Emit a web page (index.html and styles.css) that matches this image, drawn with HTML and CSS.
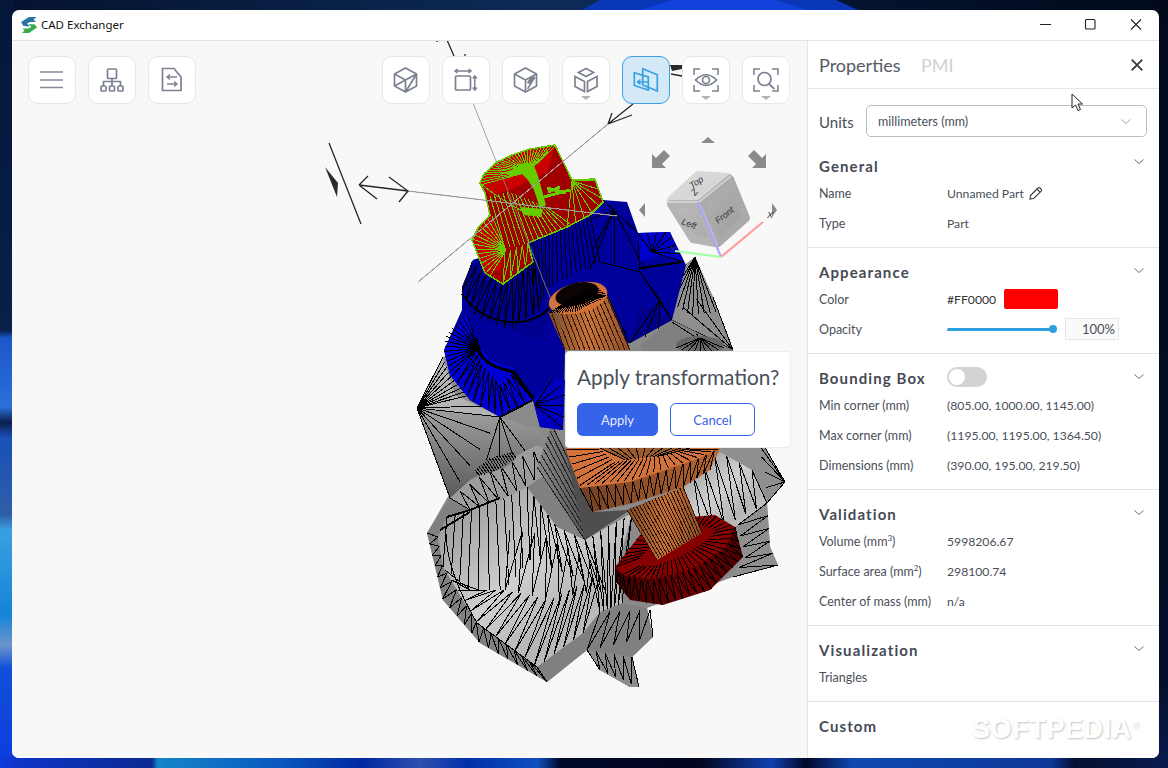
FILE: index.html
```html
<!DOCTYPE html>
<html lang="en">
<head>
<meta charset="utf-8">
<title>CAD Exchanger</title>
<link rel="stylesheet" href="styles.css">
</head>
<body>
<svg class="wallpaper" viewBox="0 0 1168 768" aria-hidden="true">
  <defs>
    <linearGradient id="wpTop" x1="0" x2="1" y1="0" y2="0">
      <stop offset="0" stop-color="#04122e"/><stop offset=".45" stop-color="#0c2a55"/><stop offset=".5" stop-color="#0c2a55"/>
      <stop offset=".75" stop-color="#04122c"/><stop offset="1" stop-color="#020a1c"/>
    </linearGradient>
    <linearGradient id="wpLeft" x1="0" x2="0" y1="0" y2="1">
      <stop offset="0" stop-color="#05163a"/><stop offset=".43" stop-color="#08204a"/><stop offset=".44" stop-color="#1c56c8"/>
      <stop offset=".53" stop-color="#2a70d8"/><stop offset=".55" stop-color="#0a1e50"/><stop offset=".57" stop-color="#1a50b8"/>
      <stop offset=".67" stop-color="#2e5fa8"/><stop offset=".69" stop-color="#3aa0e0"/><stop offset=".8" stop-color="#1584d8"/>
      <stop offset=".84" stop-color="#6d94cc"/><stop offset=".87" stop-color="#1050d8"/><stop offset="1" stop-color="#0d3be0"/>
    </linearGradient>
    <linearGradient id="wpBottom" x1="0" x2="1" y1="0" y2="0">
      <stop offset="0" stop-color="#0d3be0"/><stop offset=".015" stop-color="#0d34c8"/><stop offset=".13" stop-color="#0c2a90"/>
      <stop offset=".135" stop-color="#1585c8"/><stop offset=".24" stop-color="#0a58c0"/><stop offset=".31" stop-color="#0028a0"/>
      <stop offset=".36" stop-color="#3050b0"/><stop offset=".4" stop-color="#0030a8"/><stop offset=".46" stop-color="#1050c0"/>
      <stop offset=".48" stop-color="#00082a"/><stop offset=".6" stop-color="#02061e"/><stop offset=".66" stop-color="#1040b0"/>
      <stop offset=".69" stop-color="#02082a"/><stop offset=".73" stop-color="#1048b0"/><stop offset=".9" stop-color="#0c3898"/>
      <stop offset=".92" stop-color="#041030"/><stop offset="1" stop-color="#081a50"/>
    </linearGradient>
    <linearGradient id="wpRight" x1="0" x2="0" y1="0" y2="1">
      <stop offset="0" stop-color="#020a1c"/><stop offset=".88" stop-color="#041028"/><stop offset="1" stop-color="#081a50"/>
    </linearGradient>
  </defs>
  <rect width="1168" height="12" fill="url(#wpTop)"/>
  <path d="M582 10 L600 0 H836 L858 10 Z" fill="#0a36b8"/>
  <ellipse cx="724" cy="55" rx="124" ry="60" fill="#1242dc"/>
  <rect width="14" height="768" fill="url(#wpLeft)"/>
  <rect x="1156" width="12" height="768" fill="url(#wpRight)"/>
  <rect y="756" width="1168" height="12" fill="url(#wpBottom)"/>
</svg>

<main class="window">
  <header class="titlebar">
    <svg class="app-logo" viewBox="0 0 18 18" aria-hidden="true">
      <path d="M1 6 L9 1 H16.500 L13.500 3.800 L16 6 H10 L7 7.500 L10 10.500 L3.500 10 Z" fill="#2c74a8"/>
      <path d="M17 11.500 L9 17 H2 L4.500 14.500 L2.500 12.500 H8.500 L11.500 10.800 L8.500 8 L15 8.500 Z" fill="#37a84f"/>
    </svg>
    <span class="app-title">CAD Exchanger</span>
    <div class="win-controls">
      <svg class="win-btn" viewBox="0 0 46 30" aria-hidden="true"><path d="M16 14.500 H27"/></svg>
      <svg class="win-btn" viewBox="0 0 46 30" aria-hidden="true"><rect x="15.500" y="9.500" width="9.500" height="9.500" rx="1"/></svg>
      <svg class="win-btn" viewBox="0 0 46 30" aria-hidden="true"><path d="M15 9.500 L25 19.500 M25 9.500 L15 19.500"/></svg>
    </div>
  </header>

  <div class="workspace">
    <section class="viewport">
      <svg id="model" class="model" viewBox="12 40 795 718" aria-hidden="true">
        <defs>
          <linearGradient id="gGrayDark" x1="0" x2="0" y1="0" y2="1"><stop offset="0" stop-color="#a0a0a0"/><stop offset="1" stop-color="#5a5a5a"/></linearGradient>
          <linearGradient id="gGrayLight" x1="0" x2="1" y1="0" y2="1"><stop offset="0" stop-color="#8c8c8c"/><stop offset=".45" stop-color="#d0d0d0"/><stop offset=".7" stop-color="#b4b4b4"/><stop offset="1" stop-color="#d4d4d4"/></linearGradient>
          <linearGradient id="gBox" x1="0" x2="1" y1="0" y2="0"><stop offset="0" stop-color="#8a8a8a"/><stop offset="1" stop-color="#4a4a4a"/></linearGradient>
          <linearGradient id="gOrangeShaft" x1="0" x2="1" y1="0" y2="0"><stop offset="0" stop-color="#7d4a26"/><stop offset=".5" stop-color="#c87238"/><stop offset="1" stop-color="#8e5028"/></linearGradient>
          <linearGradient id="gOrangeBand" x1="0" x2="1" y1="0" y2="0"><stop offset="0" stop-color="#6c3c20"/><stop offset="1" stop-color="#b9642f"/></linearGradient>
          <linearGradient id="gRedBand" x1="0" x2="1" y1="0" y2="0"><stop offset="0" stop-color="#3a0000"/><stop offset=".6" stop-color="#700000"/><stop offset="1" stop-color="#4a0000"/></linearGradient>
          <linearGradient id="gCubeTop" x1="0" x2="1" y1="0" y2="1"><stop offset="0" stop-color="#dedede"/><stop offset="1" stop-color="#cecece"/></linearGradient>
          <linearGradient id="gCubeLeft" x1="0" x2="1" y1="0" y2="1"><stop offset="0" stop-color="#bcbcbc"/><stop offset="1" stop-color="#a8a8a8"/></linearGradient>
          <linearGradient id="gCubeRight" x1="0" x2="1" y1="0" y2="1"><stop offset="0" stop-color="#b4b4b4"/><stop offset="1" stop-color="#9c9c9c"/></linearGradient>
        </defs>

        <g id="mesh"></g>

        <g class="dims">
          <path class="dim-thin" d="M418 282 L608 124 M408 191 L617 216 M473 103 L563 330"/>
          <path class="dim" d="M329 143 L361 224 M359 185 L368 176 M359 185 L377 199 M359 185 L408 191 M389 177 L408 191 L399 202 M608 124 L632 115 M608 124 L612 113 M608 124 L633 104 M447 40 L454 56 M437 40 V42 M465 54 V56"/>
          <path class="dim-fill" d="M325 167 L338 183 L337 197 Z M670 65 H682 V69 L672 71 Z"/>
          <path class="dim" d="M671 74 L682 76"/>
        </g>

        <g class="nav-arrows">
          <path d="M708 137 L715 143 H701 Z M645 203 V217 L639 210 Z M772 203 L777 210 L772 217 Z"/>
          <path d="M652 168 V154 L656 158 L664 150 L670 156 L662 164 L666 168 Z"/>
          <path d="M766 168 V154 L762 158 L754 150 L748 156 L756 164 L752 168 Z"/>
        </g>
        <g class="cube">
          <path class="cube-face" d="M671 200 L698 175 L728 177 L702 200 Z" fill="url(#gCubeTop)" stroke="#d8d8d8"/>
          <path class="cube-face" d="M671 204 L698 204 L715 243 L693 239 Z" fill="url(#gCubeLeft)" stroke="#b4b4b4"/>
          <path class="cube-face" d="M701 203 L730 179 L746 218 L718 243 Z" fill="url(#gCubeRight)" stroke="#aaaaaa"/>
          <path class="cube-edge" d="M668 202 L699 202 L731 176 M699 203 L717 245"/>
          <text class="cube-label" transform="translate(692 189) rotate(-35)">Top</text>
          <text class="cube-label" transform="translate(681 224) rotate(20)">Left</text>
          <text class="cube-label" transform="translate(718 224) rotate(-38)">Front</text>
          <text class="cube-label" transform="translate(695 196) rotate(-50)">Z</text>
          <text class="cube-label" transform="translate(767 218)">X</text>
          <text class="cube-label" transform="translate(669 252)">Y</text>
          <path class="axis axis-z" d="M698 202 L721 257"/>
          <path class="axis axis-x" d="M763 222 L721 257"/>
          <path class="axis axis-y" d="M675 251 L721 257"/>
        </g>
      </svg>

      <div class="toolbar">
        <div class="tool-group">
          <button class="tool" type="button" aria-label="Menu"><svg viewBox="0 0 48 48" aria-hidden="true"><path class="menu-lines" d="M12 16 H35 M12 24 H35 M12 31.500 H35"/></svg></button>
          <button class="tool" type="button" aria-label="Structure"><svg viewBox="0 0 48 48" aria-hidden="true"><rect x="19.500" y="13" width="9" height="9.500" rx="1"/><path d="M24 22.500 V30 M15.500 30 V25.500 H32.500 V30"/><rect x="13" y="30" width="5" height="5" rx="1"/><rect x="21.500" y="30" width="5" height="5" rx="1"/><rect x="30" y="30" width="5" height="5" rx="1"/></svg></button>
          <button class="tool" type="button" aria-label="Convert"><svg viewBox="0 0 48 48" aria-hidden="true"><path d="M14.500 12.500 H26 L33 21 V34.500 H14.500 Z"/><path class="arrow" d="M29 21 H19 M22 18.500 L19 21 L22 23.500 M19 28 H29 M26 25.500 L29 28 L26 30.500"/></svg></button>
        </div>
        <div class="tool-group">
          <button class="tool" type="button" aria-label="Wireframe"><svg viewBox="0 0 48 48" aria-hidden="true"><path d="M23.500 12 L34.500 18 V30 L23.500 36 L12.500 30 V18 Z M12.500 18 L23.500 24 L34.500 18 M23.500 24 V36 M12.500 30 L23.500 24 M34.500 18 L23.500 36"/></svg></button>
          <button class="tool" type="button" aria-label="Dimensions"><svg viewBox="0 0 48 48" aria-hidden="true"><rect x="13.500" y="20" width="15" height="14" rx="1"/><path class="arrow" d="M13 15 H29 M15.500 13 L13 15 L15.500 17 M26.500 13 L29 15 L26.500 17 M32.800 20 V34 M30.800 22.500 L32.800 20 L34.800 22.500 M30.800 31.500 L32.800 34 L34.800 31.500"/></svg></button>
          <button class="tool" type="button" aria-label="Section"><svg viewBox="0 0 48 48" aria-hidden="true"><path d="M23.500 12 L34.500 18 V30 L23.500 36 L12.500 30 V18 Z M12.500 18 L23.500 24 L34.500 18 M23.500 24 V36"/><path class="arrow" d="M25.500 33 L33 21 M27 28 L31.500 20.500 M25.500 27 L29.500 21"/></svg></button>
          <button class="tool" type="button" aria-label="Explode"><svg viewBox="0 0 48 48" aria-hidden="true"><path d="M24 12.500 L31.500 16.500 L24 20.500 L16.500 16.500 Z M13 20.500 L22.500 25.500 V35.500 L13 30.500 Z M35 20.500 L25.500 25.500 V35.500 L35 30.500 Z"/></svg><span class="caret"></span></button>
          <button class="tool tool-active" type="button" aria-label="Transform"><svg viewBox="0 0 48 48" aria-hidden="true"><path d="M20.700 12.700 L35.300 18.700 V35 L20.700 29 Z"/><path d="M12.300 16.700 L26.300 21 V34 L12.300 29.500 Z"/><path class="arrow" d="M27 26 H15.500 M18.500 23.500 L15.500 26 L18.500 28.500"/></svg></button>
          <button class="tool" type="button" aria-label="Visibility"><svg viewBox="0 0 48 48" aria-hidden="true"><path class="arrow" d="M12 19 V13 H18 M30 13 H36 V19 M12 29 V35 H18 M30 35 H36 V29"/><path d="M13.500 24 Q24 13.500 34.500 24 Q24 34.500 13.500 24 Z"/><circle cx="24" cy="24" r="3.500"/></svg><span class="caret"></span></button>
          <button class="tool" type="button" aria-label="Zoom"><svg viewBox="0 0 48 48" aria-hidden="true"><path class="arrow" d="M12 19 V13 H18 M30 13 H36 V19 M12 29 V35 H18 M30 35 H36 V29"/><circle cx="22.500" cy="23" r="6.500"/><path d="M27 28 L32.500 33"/></svg><span class="caret"></span></button>
        </div>
      </div>

      <div class="dialog">
        <p class="dialog-title">Apply transformation?</p>
        <div class="dialog-actions">
          <button class="btn btn-primary" type="button">Apply</button>
          <button class="btn btn-outline" type="button">Cancel</button>
        </div>
      </div>
    </section>

    <aside class="panel">
      <div class="panel-head">
        <span class="tab tab-on">Properties</span>
        <span class="tab tab-off">PMI</span>
        <svg class="panel-close" viewBox="0 0 12 12" aria-hidden="true"><path d="M.7 .7 L11.300 11.300 M11.300 .7 L.7 11.300"/></svg>
      </div>

      <div class="section section-first">
        <div class="units">
          <span class="units-label">Units</span>
          <div class="select"><span>millimeters (mm)</span><svg class="chev chev-light" viewBox="0 0 10 5" aria-hidden="true"><path d="M.5 .5 L5 4.500 L9.500 .5"/></svg></div>
        </div>
        <div class="sec-head"><h2>General</h2><svg class="chev" viewBox="0 0 10 5" aria-hidden="true"><path d="M.5 .5 L5 4.500 L9.500 .5"/></svg></div>
        <div class="row"><span>Name</span><span class="val">Unnamed Part <svg class="pencil" viewBox="0 0 14 14" aria-hidden="true"><path d="M1.500 9.500 L9 2 Q10 1 11 2 L12.300 3.300 Q13 4.300 12 5.300 L4.700 12.500 L1 13 Z M8 3 L11.300 6.300"/></svg></span></div>
        <div class="row"><span>Type</span><span class="val">Part</span></div>
      </div>

      <div class="section">
        <div class="sec-head"><h2>Appearance</h2><svg class="chev" viewBox="0 0 10 5" aria-hidden="true"><path d="M.5 .5 L5 4.500 L9.500 .5"/></svg></div>
        <div class="row"><span>Color</span><span class="val val-color"><span class="hex">#FF0000</span><span class="swatch"></span></span></div>
        <div class="row"><span>Opacity</span><span class="val val-slider"><span class="slider"><span class="thumb"></span></span><span class="pct">100%</span></span></div>
      </div>

      <div class="section">
        <div class="sec-head"><h2>Bounding Box</h2><span class="toggle"><span class="knob"></span></span><svg class="chev" viewBox="0 0 10 5" aria-hidden="true"><path d="M.5 .5 L5 4.500 L9.500 .5"/></svg></div>
        <div class="row"><span>Min corner (mm)</span><span class="val">(805.00, 1000.00, 1145.00)</span></div>
        <div class="row"><span>Max corner (mm)</span><span class="val">(1195.00, 1195.00, 1364.50)</span></div>
        <div class="row"><span>Dimensions (mm)</span><span class="val">(390.00, 195.00, 219.50)</span></div>
      </div>

      <div class="section">
        <div class="sec-head"><h2>Validation</h2><svg class="chev" viewBox="0 0 10 5" aria-hidden="true"><path d="M.5 .5 L5 4.500 L9.500 .5"/></svg></div>
        <div class="row"><span>Volume (mm<sup>3</sup>)</span><span class="val">5998206.67</span></div>
        <div class="row"><span>Surface area (mm<sup>2</sup>)</span><span class="val">298100.74</span></div>
        <div class="row"><span>Center of mass (mm)</span><span class="val">n/a</span></div>
      </div>

      <div class="section">
        <div class="sec-head"><h2>Visualization</h2><svg class="chev" viewBox="0 0 10 5" aria-hidden="true"><path d="M.5 .5 L5 4.500 L9.500 .5"/></svg></div>
        <div class="row"><span>Triangles</span></div>
      </div>

      <div class="section section-last">
        <div class="sec-head"><h2>Custom</h2></div>
      </div>

      <span class="watermark">SOFTPEDIA<sup>®</sup></span>
      <svg class="cursor" viewBox="0 0 13 19" aria-hidden="true"><path d="M1 1 V15 L4.500 12 L7 17.500 L9.500 16.500 L7 11 H11.500 Z"/></svg>
    </aside>
  </div>
</main>
<script src="model.js"></script>
</body>
</html>
```

FILE: styles.css
```css
* { box-sizing: border-box; }
html, body { margin: 0; height: 100%; }
body {
  padding: 10px 9px 10px 12px;
  background: #06163a;
  font-family: Lato, "Noto Sans", sans-serif;
  overflow: hidden;
}
.wallpaper { position: absolute; left: 0; top: 0; width: 1168px; height: 768px; }

.window {
  position: relative;
  display: flex;
  flex-direction: column;
  height: 748px;
  background: #fff;
  border-radius: 7px;
  overflow: hidden;
}

.titlebar { display: flex; align-items: center; height: 31px; flex: none; padding: 0 0 1px 8px; border-bottom: 1px solid #e3e3e3; }
.app-logo { width: 18px; height: 18px; }
.app-title { margin-left: 3px; font: 11.500px "Noto Sans", sans-serif; color: #111; }
.win-controls { display: flex; margin-left: auto; margin-right: -3px; }
.win-btn { width: 46px; height: 30px; fill: none; stroke: #222; stroke-width: 1.100; }

.workspace { display: flex; flex: 1; min-height: 0; }

.viewport { position: relative; flex: 1; background: #f8f8f8; overflow: hidden; }
.model { position: absolute; left: 0; top: -1px; width: 795px; height: 718px; }
.mesh-line { fill: none; shape-rendering: crispEdges; }

.dim-thin { fill: none; stroke: #8c8c8c; stroke-width: .8; }
.dim { fill: none; stroke: #262626; stroke-width: 1.300; }
.dim-fill { fill: #2a2a2a; }
.nav-arrows path { fill: #8a8a8a; }
.cube-face { stroke-width: 8; stroke-linejoin: round; }
.cube-edge { fill: none; stroke: #e8e8e8; stroke-width: 2; opacity: .6; }
.cube-label { font: italic 9px "Liberation Sans", sans-serif; fill: #333; }
.axis { fill: none; stroke-width: 2.200; }
.axis-z { stroke: #a8a8ff; }
.axis-x { stroke: #ff9c9c; }
.axis-y { stroke: #a0ffa0; }

.toolbar { position: absolute; left: 16px; right: 17px; top: 15px; display: flex; justify-content: space-between; }
.tool-group { display: flex; gap: 12px; }
.tool { position: relative; width: 48px; height: 48px; padding: 0; background: #fff; border: 1px solid #e8e8e8; border-radius: 10px; }
.tool svg { position: absolute; left: -1px; top: -1px; width: 48px; height: 48px; fill: none; stroke: #7b8190; stroke-width: 1.700; }
.tool .arrow { stroke-width: 1.500; }
.tool .menu-lines { stroke: #868a98; stroke-width: 1.600; }
.tool-active { background: #d4e9f7; border-color: #3ea1df; }
.tool-active svg { stroke: #36a0e2; }
.caret { position: absolute; left: 18px; top: 39px; border-style: solid; border-width: 4px 5px 0; border-color: #b0b4bc transparent transparent; }

.dialog { position: absolute; left: 553px; top: 310px; width: 226px; height: 97px; padding: 11px 11px; background: #fff; border: 1px solid #ececec; border-radius: 4px; }
.dialog-title { margin: 0; font-size: 20.800px; line-height: 27px; color: #4a505c; white-space: nowrap; }
.dialog-actions { display: flex; gap: 12px; margin-top: 13px; }
.btn { height: 33px; padding: 0; font: 13px Lato, sans-serif; border-radius: 6px; }
.btn-primary { width: 81px; color: #e4eafc; background: #3563e9; border: 0; }
.btn-outline { width: 85px; color: #3563e9; background: #fff; border: 1px solid #3563e9; }

.panel { position: relative; width: 352px; flex: none; background: #fff; border-left: 1px solid #e3e3e3; color: #4a4f5a; font-size: 12.500px; overflow: hidden; }
.panel-head { display: flex; align-items: center; height: 48px; padding: 0 16px 0 11px; border-bottom: 1px solid #e3e3e3; }
.tab { font-size: 18px; }
.tab-on { width: 102px; color: #555a64; }
.tab-off { color: #d2d2d2; }
.panel-close { width: 12px; height: 12px; margin-left: auto; fill: none; stroke: #333; stroke-width: 1.700; }

.section { padding: 12px 11px 9px; border-bottom: 1px solid #e3e3e3; }
.section-first { padding-top: 16px; }
.section-last { border-bottom: 0; }

.units { display: flex; align-items: center; height: 32px; }
.units-label { width: 47px; font-size: 15px; padding-top: 2px; }
.select { display: flex; align-items: center; justify-content: space-between; width: 281px; height: 32px; padding: 1px 15px 0 11px; border: 1px solid #bdbdbd; border-radius: 5px; font-size: 12.500px; color: #4a4f5a; }

.sec-head { position: relative; display: flex; align-items: center; height: 24px; padding-bottom: 1px; }
.section-first .sec-head { margin-top: 17px; }
h2 { margin: 0; font-size: 15px; font-weight: 700; letter-spacing: 1.100px; color: #454a54; }
.chev { width: 10px; height: 5px; fill: none; stroke: #6c6c6c; stroke-width: 1; }
.sec-head .chev { position: absolute; left: 315px; top: 8px; }
.section-first .sec-head .chev { top: 5px; }
.chev-light { stroke: #a8a8a8; }

.row { display: grid; grid-template-columns: 128px 1fr; align-items: center; height: 30px; white-space: nowrap; }
.row sup { font-size: 8px; line-height: 0; }
.val { display: flex; align-items: center; font-size: 12.200px; }
.pencil { width: 14px; height: 14px; margin-left: 5px; fill: none; stroke: #3a3a3a; stroke-width: 1.100; }
.val-color { gap: 8px; }
.hex { width: 49px; color: #333; }
.swatch { width: 54px; height: 20px; background: #f00; border-radius: 2px; }
.val-slider { gap: 11px; }
.slider { position: relative; width: 107px; height: 3px; background: #2f9fe0; border-radius: 2px; }
.thumb { position: absolute; right: -3px; top: -2.500px; width: 8px; height: 8px; background: #2f9fe0; border-radius: 50%; }
.pct { width: 54px; height: 22px; padding-right: 3px; font-size: 13px; line-height: 20px; text-align: right; background: #fafafa; border: 1px solid #e6e6e6; }

.toggle { position: absolute; left: 128px; top: 1px; width: 40px; height: 20px; background: #d3d3d3; border-radius: 10px; }
.knob { position: absolute; left: 2px; top: 2px; width: 16px; height: 16px; background: #fff; border-radius: 50%; }

.watermark { position: absolute; left: 164px; top: 673px; font: 700 27px "Liberation Sans", sans-serif; color: #fff; letter-spacing: .6px; text-shadow: 1px 1px 2px #c4c4c4; white-space: nowrap; }
.watermark sup { font-size: 9px; }
.cursor { position: absolute; left: 263px; top: 52px; width: 13px; height: 19px; fill: #fff; stroke: #222; stroke-width: 1; }
```

FILE: model.js
```js
// Draws the triangulated part in the viewport from a few outlines.
(function () {
  var NS = 'http://www.w3.org/2000/svg';
  var root = document.getElementById('mesh');

  function add(tag, attrs) {
    var el = document.createElementNS(NS, tag);
    for (var k in attrs) el.setAttribute(k, attrs[k]);
    root.appendChild(el);
    return el;
  }
  function poly(pts, fill) {
    add('polygon', { points: pts.map(function (p) { return p.join(','); }).join(' '), fill: fill });
  }
  function along(line, t) {
    var total = 0, i, seg = [];
    for (i = 1; i < line.length; i++) {
      var d = Math.hypot(line[i][0] - line[i - 1][0], line[i][1] - line[i - 1][1]);
      seg.push(d); total += d;
    }
    var at = t * total;
    for (i = 0; i < seg.length; i++) {
      if (at <= seg[i] || i === seg.length - 1) {
        var f = seg[i] ? at / seg[i] : 0;
        return [line[i][0] + (line[i + 1][0] - line[i][0]) * f, line[i][1] + (line[i + 1][1] - line[i][1]) * f];
      }
      at -= seg[i];
    }
  }
  function stroke(d, color, width) {
    add('path', { d: d, stroke: color || '#000', 'stroke-width': width || 1, 'class': 'mesh-line' });
  }
  function seg(a, b) { return 'M' + a[0].toFixed(1) + ' ' + a[1].toFixed(1) + 'L' + b[0].toFixed(1) + ' ' + b[1].toFixed(1); }
  function band(a, b, n, color, width) {
    var d = '';
    for (var i = 0; i <= n; i++) {
      var A = along(a, i / n), B = along(b, i / n);
      d += seg(A, B);
      if (i < n) d += seg(B, along(a, (i + 1) / n));
    }
    stroke(d, color, width);
  }
  function ribs(a, b, n, color) {
    var d = '';
    for (var i = 0; i <= n; i++) d += seg(along(a, i / n), along(b, i / n));
    stroke(d, color);
  }
  function fan(apex, arc, n, color, width) {
    var d = '';
    for (var i = 0; i <= n; i++) d += seg(apex, along(arc, i / n));
    stroke(d, color, width);
  }
  function outline(pts, color, width) {
    var d = '';
    for (var i = 0; i < pts.length; i++) d += seg(pts[i], pts[(i + 1) % pts.length]);
    stroke(d, color, width);
  }

  /* grey housing, back */
  poly([[417,408],[443,357],[560,330],[662,283],[695,257],[713,297],[733,350],[753,427],[785,482],[767,503],[770,547],[778,565],[733,577],[647,608],[653,637],[632,657],[639,687],[630,687],[600,670],[587,650],[547,682],[480,643],[443,600],[427,533],[450,493]], '#8a8a8a');

  /* upper-right facets */
  poly([[662,283],[695,257],[713,297],[733,350],[672,320]], '#8e8e8e');
  fan([695,257], [[668,300],[690,315],[716,312]], 9, '#000');
  fan([733,350], [[672,320],[690,300],[713,297]], 3, '#000');
  poly([[672,320],[733,350],[753,427],[660,430],[640,345]], '#808080');
  fan([700,340], [[672,322],[733,352],[750,420]], 5, '#000');
  add('ellipse', { cx: 700, cy: 345, rx: 24, ry: 9, fill: '#666' });
  fan([700,338], [[676,348],[700,354],[724,348]], 8, '#000');

  /* left facets */
  poly([[417,408],[443,357],[455,395],[500,417]], '#b4b4b4');
  fan([417,408], [[443,357],[450,375],[470,395]], 9, '#000');
  fan([417,408], [[470,395],[500,417]], 2, '#000');
  poly([[417,408],[500,417],[540,430],[540,460],[480,480],[450,498]], 'url(#gGrayDark)');
  fan([417,408], [[500,417],[450,498]], 5, '#000');
  fan([500,417], [[480,480],[537,467]], 3, '#000');

  /* right wing */
  poly([[700,455],[753,427],[785,482],[767,503],[770,547],[778,565],[733,577],[743,557],[735,527],[710,515],[702,533],[683,487]], '#8f8f8f');
  poly([[683,487],[720,452],[752,470],[767,503],[735,527],[710,515],[702,533]], 'url(#gGrayLight)');
  band([[683,487],[720,452],[752,470]], [[702,533],[735,520],[767,503]], 6, '#000');
  fan([785,482], [[753,427],[765,470],[767,503]], 5, '#000');
  band([[767,503],[770,547],[778,565]], [[738,525],[745,558],[733,577]], 5, '#000');

  /* bowl */
  poly([[450,498],[540,462],[560,500],[585,540],[620,603],[647,608],[653,637],[632,657],[639,687],[630,687],[600,670],[587,650],[547,682],[480,643],[443,600],[427,533]], '#808080');
  band([[427,533],[443,600],[480,643],[547,682]], [[438,537],[443,567],[477,623],[537,667]], 18, '#000');
  poly([[438,537],[443,567],[477,623],[537,667],[583,633],[600,612],[622,603],[617,570],[632,513],[585,540],[557,527],[527,487],[500,500],[470,510],[447,517]], 'url(#gGrayLight)');
  ribs([[447,517],[470,510],[500,500],[527,487]], [[443,567],[470,590],[505,590],[530,560]], 10, '#000');
  band([[445,570],[480,625],[537,667],[583,633]], [[470,590],[505,590],[550,600],[600,575]], 16, '#000');
  band([[527,487],[557,527],[585,540]], [[530,560],[570,575],[605,590]], 7, '#000');
  band([[585,540],[632,513]], [[600,612],[622,603]], 6, '#000');
  band([[510,530],[545,535],[590,560]], [[505,590],[550,600],[600,590]], 7, '#000');
  stroke('M447 517 Q440 560 477 623 L537 667', '#000', 1);

  /* top strip and lower fins */
  poly([[450,498],[470,480],[537,445],[547,450],[552,470],[527,487],[500,500],[470,510]], '#9c9c9c');
  band([[450,498],[490,470],[545,447]], [[470,510],[505,498],[552,470]], 9, '#000');
  add('ellipse', { cx: 495, cy: 464, rx: 22, ry: 7, fill: '#777', transform: 'rotate(-20 495 464)' });
  ribs([[475,470],[490,458],[512,452]], [[480,476],[497,470],[516,458]], 16, '#000');
  stroke('M447 517 L470 510 L500 498 M440 530 L470 512', '#000', 2);
  poly([[587,650],[632,657],[639,687],[630,687],[600,670]], '#8c8c8c');
  band([[587,650],[632,657]], [[600,670],[639,687]], 5, '#000');
  band([[600,612],[650,610]], [[587,650],[653,637]], 5, '#000');

  /* central box */
  poly([[537,467],[552,425],[565,448],[593,512],[585,540]], 'url(#gBox)');
  ribs([[537,467],[552,425]], [[585,540],[593,512]], 7, '#222');
  poly([[565,448],[593,512],[630,510],[585,540]], '#4e4e4e');

  /* dark red disc */
  poly([[615,567],[617,583],[630,600],[663,605],[710,590],[743,557],[735,527]], 'url(#gRedBand)');
  band([[615,567],[622,575],[650,580],[690,570],[725,548],[735,527]], [[617,583],[630,600],[663,605],[710,590],[743,557],[735,527]], 24, '#000');
  poly([[615,567],[622,575],[650,580],[690,570],[725,548],[735,527],[715,515],[680,518],[640,535]], '#850000');
  ribs([[615,567],[640,535],[680,518],[715,515],[735,527],[725,548],[690,570],[650,580],[622,575]], [[640,558],[652,545],[680,530],[702,526],[715,530],[708,540],[680,556],[655,566],[640,566]], 48, '#000');

  /* lower shaft */
  poly([[627,510],[683,487],[702,533],[657,560]], 'url(#gOrangeShaft)');
  ribs([[627,510],[683,487]], [[657,560],[702,533]], 18, '#2a1206');

  /* washer */
  poly([[565,448],[720,448],[710,470],[683,487],[633,503],[593,512],[580,488]], 'url(#gOrangeBand)');
  band([[580,488],[630,482],[680,465],[715,448]], [[593,512],[633,503],[683,487],[710,470]], 16, '#000');
  poly([[565,448],[720,448],[700,458],[680,465],[630,482],[580,488]], '#d2723a');
  ribs([[566,450],[580,486],[630,480],[680,464],[718,449]], [[600,449],[615,462],[650,458],[675,452],[690,449]], 24, '#000');
  poly([[600,448],[690,448],[660,456],[625,460]], '#9a5a2c');
  ribs([[600,448],[690,448]], [[625,460],[660,456]], 10, '#000');

  /* blue body */
  poly([[444,350],[462,310],[462,287],[473,260],[528,243],[603,200],[627,202],[638,233],[670,232],[686,265],[672,320],[630,343],[565,350],[563,430],[540,427],[533,400],[500,417],[470,400],[450,375]], '#00009a');
  /* lower ring */
  poly([[444,350],[467,312],[478,345],[490,360],[513,368],[533,400],[500,417],[470,400],[450,375]], '#0000d4');
  fan([478,348], [[467,314],[446,335],[444,352],[452,376]], 14, '#000');
  band([[452,376],[470,400],[500,417],[533,400]], [[478,348],[482,365],[500,385],[515,370]], 12, '#000');
  stroke('M478 345 Q480 362 500 368 L513 372 L533 398 M476 338 Q476 352 487 362', '#000', 3);
  /* cylinder around head */
  poly([[462,287],[473,260],[528,243],[540,240],[550,320],[540,340],[510,330],[475,315]], '#000090');
  band([[472,262],[485,273],[503,284],[533,262]], [[462,292],[475,315],[510,330],[540,310]], 12, '#000');
  stroke('M462 294 Q480 320 510 322 T556 300', '#000', 2);
  /* top ring */
  poly([[528,243],[603,202],[590,270],[560,285]], '#0000a0');
  ribs([[530,244],[567,227],[590,215]], [[535,310],[552,285],[600,262]], 16, '#000');
  fan([614,210], [[590,220],[592,260],[645,270]], 3, '#000');
  stroke('M603 200 L638 233 L640 272 M614 210 L590 270 M640 272 L672 320 M640 272 L600 262 M640 272 L660 300 L630 343 M607 295 L630 343', '#000', 1);
  poly([[638,233],[670,232],[682,262],[660,255],[640,262]], '#0000cc');
  fan([652,252], [[638,234],[670,232],[684,262]], 7, '#000');
  stroke('M640 268 L682 262', '#000', 2);
  /* blue tail under the ring */
  poly([[533,400],[553,378],[565,380],[563,430],[540,427]], '#0000c0');
  fan([535,405], [[553,378],[565,390],[563,428]], 5, '#000');
  stroke('M513 372 L533 398 M500 417 L533 400', '#000', 2);
  poly([[640,305],[672,320],[630,343]], '#000088');
  fan([660,300], [[672,320],[650,335],[630,343]], 3, '#000');

  /* orange pin */
  poly([[548,312],[607,295],[630,350],[565,350]], 'url(#gOrangeShaft)');
  ribs([[552,314],[607,297]], [[565,350],[630,350]], 13, '#2a1206');
  add('ellipse', { cx: 578, cy: 298, rx: 30, ry: 15, fill: '#d27238', transform: 'rotate(-14 578 298)' });
  add('ellipse', { cx: 577, cy: 294, rx: 22, ry: 11, fill: '#0a0503', transform: 'rotate(-14 577 294)' });
  fan([576,296], [[549,313],[575,312],[607,296],[595,285]], 30, '#000');

  /* red head */
  var head = [[480,183],[484,174],[497,162],[512,155],[530,149],[555,145],[572,180],[595,179],[603,202],[590,215],[567,227],[528,243],[533,262],[503,284],[485,273],[472,240],[478,228],[490,215],[485,193]];
  var g = '#66cc00';
  poly(head, '#a00000');
  /* top face, radial */
  poly([[480,183],[484,174],[497,162],[512,155],[530,149],[555,145],[548,172],[510,190],[490,195]], '#c80000');
  fan([528,172], [[480,185],[484,174],[497,162],[512,155],[530,149],[555,146]], 26, g);
  /* cylinder wall */
  ribs([[490,196],[510,192],[530,200],[548,208]], [[505,248],[528,243],[550,234],[570,224]], 14, g);
  /* lug right */
  fan([572,181], [[595,180],[603,202],[590,215],[567,227]], 7, g);
  /* lower left ring */
  poly([[472,240],[478,228],[490,215],[505,245],[500,270],[485,273]], '#c80000');
  fan([506,250], [[492,216],[478,228],[472,240],[480,262],[490,276]], 14, g);
  band([[505,252],[528,243]], [[503,284],[533,262]], 4, g);
  outline(head, g, 1.500);
  /* dense centre */
  poly([[517,164],[533,163],[538,176],[546,205],[540,208],[534,190],[528,180],[520,172]], g);
  poly([[520,207],[543,209],[541,217],[524,215]], g);
  stroke('M540 198 L570 190 M547 188 L566 193 M548 192 L560 187', g, 3);
  stroke('M480 183 Q500 200 530 215', g, 1);

  /* transparent axes over the part */
  stroke('M418 282 L608 124 M408 191 L617 216', '#b8b8b8');
})();
```
